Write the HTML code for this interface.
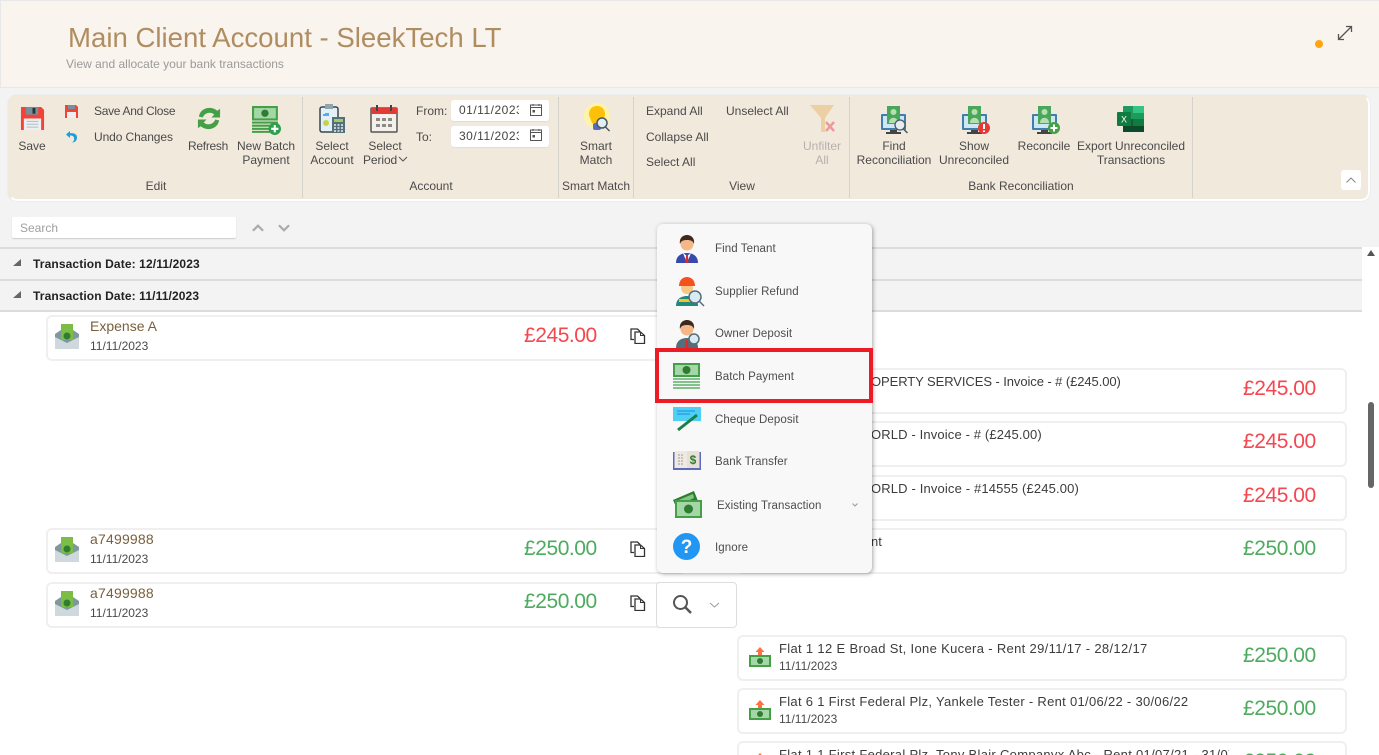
<!DOCTYPE html>
<html><head><meta charset="utf-8"><style>
*{box-sizing:border-box}
html,body{margin:0;padding:0;width:1379px;height:755px;overflow:hidden;background:#fff;font-family:"Liberation Sans",sans-serif}
body{position:relative}
.a{position:absolute}
.t{position:absolute;white-space:nowrap;font-size:12px;line-height:14px;color:#4a4a4a}
.c{text-align:center;transform:translateX(-50%)}
.sep{position:absolute;top:97px;width:1px;height:101px;background:#d5d2cc}
.card{position:absolute;height:46px;background:#fff;border:2px solid #efefef;border-radius:6px}
.amt{position:absolute;white-space:nowrap;font-size:21px;line-height:26px;letter-spacing:-.45px;margin-top:1px}
.r{color:#f4474f}.g{color:#4dab5f}
.nm{color:#7a5f3c;font-size:14px;line-height:16px}
.dt{font-size:12px;line-height:14px;color:#4a4a4a}
.ds{font-size:13px;line-height:16px;color:#3c3c3c}
.hdr{position:absolute;left:0;width:1362px;height:32px;background:#f3f3f3;border-top:2px solid #dcdcdc}
.hdr b{position:absolute;left:33px;top:8px;font-size:12px;line-height:14px;color:#222;letter-spacing:.12px}
.hdr i{position:absolute;left:13px;top:10px;width:0;height:0;border-left:8px solid transparent;border-bottom:7px solid #666}
.m{position:absolute;left:715px;font-size:11.5px;line-height:14px;color:#4d4d4d;white-space:nowrap;letter-spacing:.08px}
svg{position:absolute;overflow:visible}
.date{position:absolute;left:451px;width:98px;height:21px;background:#fff;border-radius:3px;box-shadow:0 1px 1px #ddd;font-size:12px;line-height:21px;color:#444;padding-left:8px;overflow:hidden;letter-spacing:.5px}
</style></head><body>
<svg width="0" height="0" style="position:absolute"><defs>
<symbol id="env" viewBox="0 0 26 26"><path d="M1 10 13 2l12 8v15H1z" fill="#7f979f"/><rect x="7" y="0" width="12" height="16" fill="#7cbd45"/><circle cx="13" cy="12" r="3.500" fill="#2f7d32"/><path d="M1 13l12 6 12-6v12H1z" fill="#cfd8dc"/></symbol>
<symbol id="rent" viewBox="0 0 22 21"><path d="M11 0l4.500 5H13v4H9V5H6.500z" fill="#ff7043"/><rect y="8" width="22" height="12" fill="#43a047"/><rect x="2" y="10" width="18" height="8" fill="#a5d6a7"/><circle cx="11" cy="14" r="3" fill="#2e7d32"/></symbol>
<symbol id="copy" viewBox="0 0 16 16"><path d="M4 11.500H1V1h6.500L10 3.500" fill="#fff" stroke="#333" stroke-width="1.300"/><path d="M5 4h5.500L14.500 7.500V15.500H5z" fill="#fff" stroke="#333" stroke-width="1.300"/><path d="M10.500 4v3.500h4" fill="none" stroke="#333"/></symbol>
<symbol id="cal" viewBox="0 0 12 12"><rect x=".5" y="1" width="11" height="10.500" fill="none" stroke="#555"/><path d="M.5 3.500h11M3 0v2M9 0v2" stroke="#555"/><rect x="2.500" y="6" width="2.500" height="2.500" fill="#555"/></symbol>
<symbol id="mon" viewBox="0 0 28 30"><rect x="0" y="9" width="25" height="16" rx="1" fill="#3f7fb0"/><rect x="2" y="11" width="21" height="12" fill="#cfe6f5"/><rect x="9" y="25" width="7" height="2" fill="#444"/><rect x="5" y="27" width="15" height="2" fill="#444"/><rect x="6" y="1" width="13" height="18" fill="#4aa65a"/><circle cx="12.500" cy="7" r="3" fill="#b6dfb0"/><path d="M8 18c0-7 9-7 9 0z" fill="#b6dfb0"/></symbol>
</defs></svg>

<!-- header -->
<div class="a" style="left:0;top:0;width:1379px;height:88px;background:#f9f4ee;border-bottom:1px solid #e8e8e8;border-top:1px solid #e8e8e8;border-left:1px solid #e8e8e8"></div>
<div class="t" style="left:68px;top:20px;font-size:27.600px;line-height:36px;color:#b08d60">Main Client Account - SleekTech LT</div>
<div class="t" style="left:66px;top:57px;font-size:12px;color:#9b9b9b">View and allocate your bank transactions</div>
<div class="a" style="left:1315px;top:40px;width:8px;height:8px;border-radius:50%;background:#ffa50f"></div>
<svg style="left:1337px;top:25px" width="16" height="16" viewBox="0 0 16 16"><path d="M1.500 14.500 14.500 1.500M9 1.500h5.500V7M1.500 9v5.500H7" fill="none" stroke="#555" stroke-width="1.300"/></svg>

<!-- content bg -->
<div class="a" style="left:0;top:88px;width:1379px;height:160px;background:#f3f3f3"></div>
<div class="a" style="left:8px;top:95px;width:1362px;height:106px;background:#f2e9dd;border:2px solid #fff;border-top-color:#f2e9dd;border-left-color:#f2e9dd;border-radius:9px;box-shadow:0 0 1px #ccc"></div>
<div class="sep" style="left:302px"></div><div class="sep" style="left:558px"></div><div class="sep" style="left:633px"></div><div class="sep" style="left:849px"></div><div class="sep" style="left:1192px"></div>

<!-- Edit group -->
<svg style="left:20px;top:106px" width="25" height="25" viewBox="0 0 26 26"><path d="M1 1h21l3 3v21H1z" fill="#f44336"/><rect x="6" y="1" width="13" height="8" fill="#78909c"/><rect x="13" y="2" width="3" height="6" fill="#263238"/><rect x="4" y="13" width="18" height="12" fill="#eceff1"/><path d="M7 16h12M7 19h12M7 22h12" stroke="#b0bec5"/></svg>
<div class="t c" style="left:32px;top:139px">Save</div>
<svg style="left:65px;top:105px" width="13" height="13" viewBox="0 0 13 13"><path d="M0 0h11l2 2v11H0z" fill="#f44336"/><rect x="3" y="0" width="7" height="4" fill="#78909c"/><rect x="2" y="7" width="9" height="6" fill="#eceff1"/></svg>
<svg style="left:65px;top:130px" width="13" height="13" viewBox="0 0 13 13"><path d="M5 1 1 4.500 5 8V5.500c3 0 4.500 1 4 4.500-.2 1-1 2-2 2.500 3.500 0 5-2.500 5-5C12 4 9 3 5 3.200z" fill="#1e9fd8"/></svg>
<div class="t" style="left:94px;top:104px;letter-spacing:-.3px">Save And Close</div>
<div class="t" style="left:94px;top:130px;letter-spacing:-.1px">Undo Changes</div>
<svg style="left:196px;top:106px" width="26" height="25" viewBox="0 0 27 26"><path d="M3 11C4 5 9 2 14 2c3 0 6 1 8 3l3-2v9h-9l3-3c-1.500-1.500-3-2-5-2-3 0-6 2-7 5z" fill="#43a047"/><path d="M24 15c-1 6-6 9-11 9-3 0-6-1-8-3l-3 2v-9h9l-3 3c1.500 1.500 3 2 5 2 3 0 6-2 7-5z" fill="#43a047"/></svg>
<div class="t c" style="left:208px;top:139px;letter-spacing:-.3px">Refresh</div>
<svg style="left:252px;top:106px" width="29" height="29" viewBox="0 0 28 28"><rect x="0" y="0" width="25" height="14" fill="#43a047"/><rect x="2" y="2" width="21" height="10" fill="#a5d6a7"/><circle cx="12.500" cy="7" r="3.500" fill="#2e7d32"/><path d="M0 16h25M0 19h25M0 22h25M0 25h20" stroke="#43a047" stroke-width="2"/><circle cx="22" cy="22" r="6" fill="#2e9e4f"/><path d="M22 18.500v7M18.500 22h7" stroke="#fff" stroke-width="2"/></svg>
<div class="t c" style="left:266px;top:139px">New Batch<br>Payment</div>
<div class="t c" style="left:156px;top:179px">Edit</div>

<!-- Account group -->
<svg style="left:319px;top:104px" width="28" height="30" viewBox="0 0 28 30"><rect x="1" y="3" width="18" height="25" rx="2" fill="#e3f0f7" stroke="#37474f" stroke-width="1.500"/><rect x="6" y="0" width="8" height="5" fill="#90a4ae"/><path d="M5 12v-2M7 12V9M9 12v-3" stroke="#2196f3" stroke-width="1.500"/><circle cx="7" cy="19" r="3" fill="#c6d34a"/><rect x="13" y="13" width="13" height="16" fill="#546e7a"/><rect x="15" y="15" width="9" height="3" fill="#9ccc65"/><path d="M15 21h9M15 24h9M15 27h9" stroke="#eceff1" stroke-width="1.500" stroke-dasharray="2 1.500"/></svg>
<div class="t c" style="left:332px;top:139px">Select<br>Account</div>
<svg style="left:370px;top:105px" width="28" height="28" viewBox="0 0 28 28"><rect x="1" y="3" width="26" height="24" rx="1" fill="#f5f0ea" stroke="#555" stroke-width="1.500"/><rect x="1" y="3" width="26" height="6" fill="#e53935"/><path d="M7 0v6M21 0v6" stroke="#444" stroke-width="2"/><path d="M6 13h4v3H6zM12 13h4v3h-4zM18 13h4v3h-4zM6 19h4v3H6zM12 19h4v3h-4zM18 19h4v3h-4z" fill="#8a8a8a"/></svg>
<div class="t c" style="left:385px;top:139px">Select</div>
<div class="t" style="left:363px;top:153px;letter-spacing:-.1px">Period</div>
<svg style="left:398px;top:156px" width="10" height="6" viewBox="0 0 10 6"><path d="M1 1l4 4 4-4" fill="none" stroke="#555"/></svg>
<div class="t" style="left:416px;top:104px">From:</div>
<div class="t" style="left:416px;top:130px">To:</div>
<div class="date" style="top:100px">01/11/2023</div>
<div class="date" style="top:126px">30/11/2023</div>
<div class="a" style="left:519px;top:100px;width:29px;height:21px;background:#fff"></div>
<div class="a" style="left:519px;top:126px;width:29px;height:21px;background:#fff"></div>
<svg style="left:530px;top:104px" width="12" height="12"><use href="#cal"/></svg>
<svg style="left:530px;top:129px" width="12" height="12"><use href="#cal"/></svg>
<div class="t c" style="left:431px;top:179px">Account</div>

<!-- Smart match -->
<svg style="left:581px;top:103px" width="32" height="32" viewBox="0 0 32 32"><circle cx="16" cy="13" r="13" fill="#fff3a8"/><path d="M16 3c-5 0-8 3.500-8 8 0 3 2 5 3 9h10c1-4 3-6 3-9 0-4.500-3-8-8-8z" fill="#ffc107"/><rect x="12" y="20" width="8" height="7" rx="2" fill="#5c6bc0"/><circle cx="21" cy="20" r="5" fill="#e3edf2" stroke="#455a64" stroke-width="1.500"/><path d="M24.500 24l4 4" stroke="#455a64" stroke-width="1.500"/></svg>
<div class="t c" style="left:596px;top:139px">Smart<br>Match</div>
<div class="t c" style="left:596px;top:179px">Smart Match</div>

<!-- View -->
<div class="t" style="left:646px;top:104px">Expand All</div>
<div class="t" style="left:646px;top:130px">Collapse All</div>
<div class="t" style="left:646px;top:155px">Select All</div>
<div class="t" style="left:726px;top:104px">Unselect All</div>
<svg style="left:809px;top:104px" width="30" height="30" viewBox="0 0 30 30"><path d="M1 1h24l-9 13v14l-4 0V14z" fill="#eccfa2"/><path d="M17 18l8 9M25 18l-8 9" stroke="#ec9a9a" stroke-width="2.500"/></svg>
<div class="t c" style="left:822px;top:139px;color:#b5b1aa">Unfilter<br>All</div>
<div class="t c" style="left:742px;top:179px">View</div>

<!-- Bank rec -->
<svg style="left:881px;top:105px" width="30" height="30" viewBox="0 0 30 30"><use href="#mon" width="28" height="30"/><circle cx="19" cy="20" r="5" fill="#e3edf2" stroke="#455a64" stroke-width="1.300"/><path d="M22.500 24l4 4" stroke="#455a64" stroke-width="1.500"/></svg>
<div class="t c" style="left:894px;top:139px">Find<br>Reconciliation</div>
<svg style="left:962px;top:105px" width="30" height="30" viewBox="0 0 30 30"><use href="#mon" width="28" height="30"/><circle cx="22" cy="23" r="6" fill="#e53935"/><path d="M22 19v5M22 25.500v1.500" stroke="#fff" stroke-width="2"/></svg>
<div class="t c" style="left:974px;top:139px">Show<br>Unreconciled</div>
<svg style="left:1032px;top:105px" width="30" height="30" viewBox="0 0 30 30"><use href="#mon" width="28" height="30"/><circle cx="22" cy="23" r="6" fill="#43a047"/><path d="M22 19.500v7M18.500 23h7" stroke="#fff" stroke-width="2"/></svg>
<div class="t c" style="left:1044px;top:139px">Reconcile</div>
<svg style="left:1117px;top:106px" width="28" height="26" viewBox="0 0 28 26"><rect x="6" y="0" width="21" height="26" rx="1" fill="#1d9b5e"/><rect x="16" y="0" width="11" height="7" fill="#33c481"/><rect x="16" y="13" width="11" height="7" fill="#107c41"/><rect x="6" y="13" width="10" height="7" fill="#185c37"/><rect x="6" y="20" width="21" height="6" fill="#0b4a2a"/><rect x="0" y="6" width="14" height="14" rx="1" fill="#107c41"/><text x="7" y="16.500" font-size="9" fill="#fff" text-anchor="middle" font-family="Liberation Sans">X</text></svg>
<div class="t c" style="left:1131px;top:139px">Export Unreconciled<br>Transactions</div>
<div class="t c" style="left:1021px;top:179px">Bank Reconciliation</div>
<div class="a" style="left:1341px;top:170px;width:20px;height:20px;background:#fff;border-radius:3px"></div>
<svg style="left:1346px;top:177px" width="10" height="6" viewBox="0 0 10 6"><path d="M.5 5.500 5 1l4.500 4.500" fill="none" stroke="#888"/></svg>

<!-- search -->
<div class="a" style="left:12px;top:217px;width:224px;height:21px;background:#fff;border-radius:2px;box-shadow:0 1px 1px #ccc"></div>
<div class="t" style="left:20px;top:221px;color:#a0a0a0">Search</div>
<svg style="left:252px;top:224px" width="12" height="8" viewBox="0 0 13 8"><path d="M1 7l5.500-5.500L12 7" fill="none" stroke="#aaa" stroke-width="2.400"/></svg>
<svg style="left:278px;top:224px" width="12" height="8" viewBox="0 0 13 8"><path d="M1 1l5.500 5.500L12 1" fill="none" stroke="#aaa" stroke-width="2.400"/></svg>

<!-- group headers -->
<div class="hdr" style="top:247px"><i></i><b>Transaction Date: 12/11/2023</b></div>
<div class="hdr" style="top:279px;height:33px;border-bottom:2px solid #dcdcdc"><i></i><b>Transaction Date: 11/11/2023</b></div>

<!-- scrollbar -->
<div class="a" style="left:1362px;top:247px;width:17px;height:508px;background:#fff"></div>
<div class="a" style="left:1367px;top:250px;width:0;height:0;border-left:4px solid transparent;border-right:4px solid transparent;border-bottom:6px solid #555"></div>
<div class="a" style="left:1368px;top:402px;width:6px;height:86px;border-radius:3px;background:#666"></div>

<!-- left cards -->
<div class="card" style="left:46px;top:315px;width:640px"></div>
<div class="card" style="left:46px;top:528px;width:640px"></div>
<div class="card" style="left:46px;top:582px;width:640px"></div>
<svg style="left:54px;top:324px" width="26" height="26"><use href="#env"/></svg>
<svg style="left:54px;top:537px" width="26" height="26"><use href="#env"/></svg>
<svg style="left:54px;top:591px" width="26" height="26"><use href="#env"/></svg>
<div class="t nm" style="left:90px;top:318px">Expense A</div><div class="t dt" style="left:90px;top:339px">11/11/2023</div>
<div class="t nm" style="left:90px;top:531px;letter-spacing:.2px">a7499988</div><div class="t dt" style="left:90px;top:552px">11/11/2023</div>
<div class="t nm" style="left:90px;top:585px;letter-spacing:.2px">a7499988</div><div class="t dt" style="left:90px;top:606px">11/11/2023</div>
<div class="amt r" style="left:524px;top:322px">£245.00</div>
<div class="amt g" style="left:524px;top:535px">£250.00</div>
<div class="amt g" style="left:524px;top:588px">£250.00</div>
<svg style="left:630px;top:328px" width="16" height="16"><use href="#copy"/></svg>
<svg style="left:630px;top:541px" width="16" height="16"><use href="#copy"/></svg>
<svg style="left:630px;top:595px" width="16" height="16"><use href="#copy"/></svg>

<!-- dropdown button -->
<div class="a" style="left:656px;top:582px;width:81px;height:46px;background:#fff;border:1px solid #ddd;border-radius:4px"></div>
<svg style="left:672px;top:594px" width="21" height="21" viewBox="0 0 21 21"><circle cx="8.500" cy="8.500" r="6.500" fill="none" stroke="#555" stroke-width="2"/><path d="M13 13l6 6" stroke="#555" stroke-width="2.500"/></svg>
<svg style="left:709px;top:602px" width="11" height="6" viewBox="0 0 11 6"><path d="M1 1l4.500 4L10 1" fill="none" stroke="#999"/></svg>

<!-- right cards -->
<div class="card" style="left:737px;top:368px;width:610px"></div>
<div class="card" style="left:737px;top:421px;width:610px"></div>
<div class="card" style="left:737px;top:475px;width:610px"></div>
<div class="card" style="left:737px;top:528px;width:610px"></div>
<div class="card" style="left:737px;top:635px;width:610px"></div>
<div class="card" style="left:737px;top:688px;width:610px"></div>
<div class="card" style="left:737px;top:741px;width:610px;height:46px"></div>
<div class="t ds" style="left:871px;top:374px;letter-spacing:-.08px">OPERTY SERVICES - Invoice - # (£245.00)</div>
<div class="t ds" style="left:871px;top:427px;letter-spacing:.14px">ORLD - Invoice - # (£245.00)</div>
<div class="t ds" style="left:871px;top:481px;letter-spacing:.15px">ORLD - Invoice - #14555 (£245.00)</div>
<div class="t ds" style="left:871px;top:534px">nt</div>
<div class="amt r" style="left:1243px;top:375px">£245.00</div>
<div class="amt r" style="left:1243px;top:428px">£245.00</div>
<div class="amt r" style="left:1243px;top:482px">£245.00</div>
<div class="amt g" style="left:1243px;top:535px">£250.00</div>
<div class="amt g" style="left:1243px;top:642px">£250.00</div>
<div class="amt g" style="left:1243px;top:695px">£250.00</div>
<div class="amt g" style="left:1243px;top:748px">£250.00</div>
<svg style="left:749px;top:647px" width="22" height="21"><use href="#rent"/></svg>
<svg style="left:749px;top:700px" width="22" height="21"><use href="#rent"/></svg>
<svg style="left:749px;top:753px" width="22" height="21"><use href="#rent"/></svg>
<div class="t ds" style="left:779px;top:641px;letter-spacing:.33px">Flat 1 12 E Broad St, Ione Kucera - Rent 29/11/17 - 28/12/17</div>
<div class="t dt" style="left:779px;top:659px">11/11/2023</div>
<div class="t ds" style="left:779px;top:694px;letter-spacing:.3px">Flat 6 1 First Federal Plz, Yankele Tester - Rent 01/06/22 - 30/06/22</div>
<div class="t dt" style="left:779px;top:712px">11/11/2023</div>
<div class="t ds" style="left:779px;top:747px;width:450px;overflow:hidden;letter-spacing:.3px">Flat 1 1 First Federal Plz, Tony Blair Companyx Abc - Rent 01/07/21 - 31/07/21</div>

<!-- menu -->
<div class="a" style="left:657px;top:224px;width:215px;height:349px;background:#f8f8f8;border-radius:6px;box-shadow:1px 1px 4px rgba(0,0,0,.35)"></div>
<svg style="left:675px;top:235px" width="24" height="29" viewBox="0 0 24 29"><path d="M1 28c0-7 5-10 11-10s11 3 11 10z" fill="#3949ab"/><path d="M8 18l4 3 4-3-4 10z" fill="#fff"/><path d="M11 20h2l.5 8h-3z" fill="#d32f2f"/><circle cx="12" cy="9" r="6.500" fill="#f5b788"/><path d="M5 9c-1-6 3-9 7-9s8 3 7 9c-1-3-3-4-7-4s-6 1-7 4z" fill="#3e2a1c"/></svg>
<svg style="left:675px;top:276px" width="30" height="31" viewBox="0 0 30 31"><path d="M1 30c0-7 5-10 11-10s11 3 11 10z" fill="#1f8a7a"/><rect x="4" y="23" width="16" height="3" fill="#fbc02d"/><circle cx="12" cy="12" r="6" fill="#f9c784"/><path d="M4 10c0-6 4-9 8-9s8 3 8 9z" fill="#f4511e"/><circle cx="20" cy="21" r="6" fill="#d8ebf5" stroke="#546e7a" stroke-width="1.500"/><path d="M24 25l5 5" stroke="#546e7a" stroke-width="1.500"/></svg>
<svg style="left:675px;top:320px" width="28" height="29" viewBox="0 0 28 29"><path d="M1 28c0-7 5-10 11-10s11 3 11 10z" fill="#546e7a"/><path d="M11 20h2l.5 8h-3z" fill="#d32f2f"/><circle cx="12" cy="9" r="6.500" fill="#f5b788"/><path d="M5 9c-1-6 3-9 7-9s8 3 7 9c-1-3-3-4-7-4s-6 1-7 4z" fill="#3e2a1c"/><circle cx="19" cy="19" r="5" fill="#d8ebf5" stroke="#546e7a" stroke-width="1.500"/></svg>
<svg style="left:673px;top:363px" width="27" height="26" viewBox="0 0 27 26"><rect width="27" height="14" fill="#43a047"/><rect x="2" y="2" width="23" height="10" fill="#a5d6a7"/><circle cx="13.500" cy="7" r="4" fill="#2e7d32"/><path d="M0 16h27M0 19h27M0 22h27M0 25h27" stroke="#5cb066" stroke-width="1.600"/></svg>
<svg style="left:673px;top:407px" width="29" height="24" viewBox="0 0 29 24"><rect width="28" height="14" fill="#4dd0f4"/><path d="M4 4h18M4 7h13" stroke="#1e88e5"/><path d="M5 23 24 8" stroke="#1b7f4b" stroke-width="3"/></svg>
<svg style="left:672px;top:450px" width="30" height="22" viewBox="0 0 30 22"><path d="M1 2h28v18H1z" fill="#5c6bc0"/><rect x="2.500" y="1" width="12.500" height="17" fill="#efe9e2"/><rect x="15" y="1" width="12.500" height="17" fill="#e8e0d6"/><path d="M6 5h6M6 8h6M6 11h6M6 14h6" stroke="#999" stroke-dasharray="2 1"/><text x="21" y="14" font-size="12" font-weight="bold" fill="#2e7d32" text-anchor="middle" font-family="Liberation Sans">$</text></svg>
<svg style="left:673px;top:491px" width="29" height="27" viewBox="0 0 29 27"><path d="M0 9 21 0l4 10L5 20z" fill="#2e7d32"/><path d="M3 10 20 3l1 4-15 7z" fill="#81c784"/><rect x="2" y="9" width="27" height="18" fill="#43a047"/><rect x="4" y="11" width="23" height="14" fill="#a5d6a7"/><circle cx="15.500" cy="18" r="4.500" fill="#2e7d32"/></svg>
<svg style="left:673px;top:533px" width="27" height="27" viewBox="0 0 27 27"><circle cx="13.500" cy="13.500" r="13.500" fill="#2196f3"/><text x="13.500" y="20" font-size="19" font-weight="bold" fill="#fff" text-anchor="middle" font-family="Liberation Sans">?</text></svg>
<div class="m" style="top:242px">Find Tenant</div>
<div class="m" style="top:285px">Supplier Refund</div>
<div class="m" style="top:327px">Owner Deposit</div>
<div class="m" style="top:370px">Batch Payment</div>
<div class="m" style="top:413px">Cheque Deposit</div>
<div class="m" style="top:455px">Bank Transfer</div>
<div class="m" style="left:717px;top:499px">Existing Transaction</div>
<div class="m" style="top:541px">Ignore</div>
<svg style="left:852px;top:503px" width="6" height="4" viewBox="0 0 6 4"><path d="M.5.500 3 3 5.500.500" fill="none" stroke="#999"/></svg>
<div class="a" style="left:655px;top:348px;width:218px;height:55px;border:4px solid #ed1c24"></div>
</body></html>
